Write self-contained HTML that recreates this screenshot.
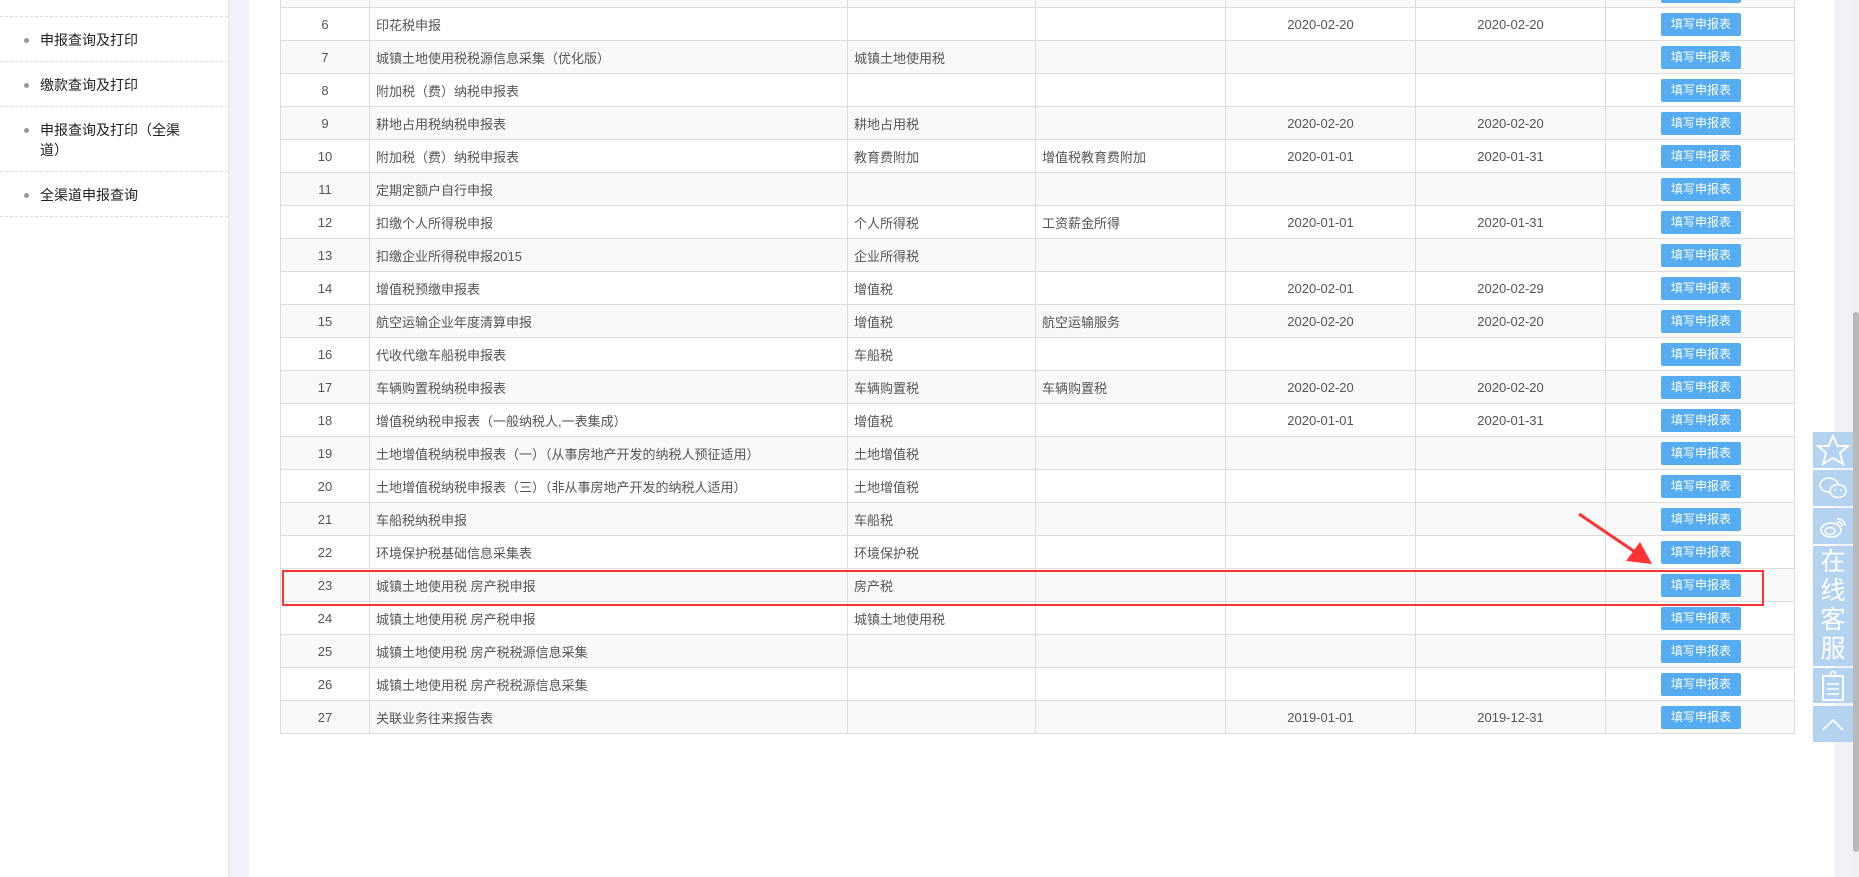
<!DOCTYPE html>
<html><head><meta charset="utf-8"><style>
body{margin:0;width:1859px;height:877px;overflow:hidden;background:#f0f2f5;font-family:"Liberation Sans","Noto Sans CJK SC",sans-serif;position:relative}
.side{position:absolute;left:0;top:0;width:228px;height:877px;background:#fff;border-right:1px solid #e2e2e2}
.side .it{position:absolute;left:0;width:228px;border-bottom:1px dashed #ddd;font-size:14px;color:#222}
.side .it span{position:absolute;left:40px}
.side .it i{position:absolute;left:24px;width:5px;height:5px;border-radius:50%;background:#999}
.main{position:absolute;left:249px;top:0;width:1585px;height:877px;background:#fff}
table{position:absolute;left:280px;top:-26px;border-collapse:collapse;table-layout:fixed;width:1514px;font-size:13px;color:#555}
td{border:1px solid #ddd;height:32px;padding:0 6px;white-space:nowrap;overflow:hidden}
tr:nth-child(odd) td{background:#f9f9f9}
td.c{text-align:center;padding:0}
.b{display:inline-block;width:80px;height:23px;line-height:23px;background:#55acf0;color:#fff;border-radius:2px;font-size:12px;text-align:center;margin-left:2px}
.red{position:absolute;left:282px;top:570px;width:1478px;height:32px;border:2px solid #f33}
.fb{position:absolute;left:1813px;width:40px;background:#b3d3f0}
.sb{position:absolute;left:1853px;top:0;width:6px;height:877px;background:#f0f0f0}
.th{position:absolute;left:1853px;top:312px;width:6px;height:540px;background:#b9b9b9;border-radius:3px}
</style></head><body>
<div class="side">
<div class="it" style="top:-20px;height:36px"></div>
<div class="it" style="top:17px;height:44px"><i style="top:21px"></i><span style="top:13px">申报查询及打印</span></div>
<div class="it" style="top:62px;height:44px"><i style="top:21px"></i><span style="top:13px">缴款查询及打印</span></div>
<div class="it" style="top:107px;height:64px"><i style="top:21px"></i><span style="top:13px;line-height:20px">申报查询及打印（全渠<br>道）</span></div>
<div class="it" style="top:172px;height:44px"><i style="top:21px"></i><span style="top:13px">全渠道申报查询</span></div>
</div>
<div class="main"></div>
<table>
<colgroup><col style="width:89px"><col style="width:478px"><col style="width:188px"><col style="width:190px"><col style="width:190px"><col style="width:190px"><col style="width:189px"></colgroup>
<tr><td class="c">5</td><td></td><td></td><td></td><td></td><td></td><td class="c"><span class="b">填写申报表</span></td></tr>
<tr><td class="c">6</td><td>印花税申报</td><td></td><td></td><td class="c">2020-02-20</td><td class="c">2020-02-20</td><td class="c"><span class="b">填写申报表</span></td></tr>
<tr><td class="c">7</td><td>城镇土地使用税税源信息采集（优化版）</td><td>城镇土地使用税</td><td></td><td></td><td></td><td class="c"><span class="b">填写申报表</span></td></tr>
<tr><td class="c">8</td><td>附加税（费）纳税申报表</td><td></td><td></td><td></td><td></td><td class="c"><span class="b">填写申报表</span></td></tr>
<tr><td class="c">9</td><td>耕地占用税纳税申报表</td><td>耕地占用税</td><td></td><td class="c">2020-02-20</td><td class="c">2020-02-20</td><td class="c"><span class="b">填写申报表</span></td></tr>
<tr><td class="c">10</td><td>附加税（费）纳税申报表</td><td>教育费附加</td><td>增值税教育费附加</td><td class="c">2020-01-01</td><td class="c">2020-01-31</td><td class="c"><span class="b">填写申报表</span></td></tr>
<tr><td class="c">11</td><td>定期定额户自行申报</td><td></td><td></td><td></td><td></td><td class="c"><span class="b">填写申报表</span></td></tr>
<tr><td class="c">12</td><td>扣缴个人所得税申报</td><td>个人所得税</td><td>工资薪金所得</td><td class="c">2020-01-01</td><td class="c">2020-01-31</td><td class="c"><span class="b">填写申报表</span></td></tr>
<tr><td class="c">13</td><td>扣缴企业所得税申报2015</td><td>企业所得税</td><td></td><td></td><td></td><td class="c"><span class="b">填写申报表</span></td></tr>
<tr><td class="c">14</td><td>增值税预缴申报表</td><td>增值税</td><td></td><td class="c">2020-02-01</td><td class="c">2020-02-29</td><td class="c"><span class="b">填写申报表</span></td></tr>
<tr><td class="c">15</td><td>航空运输企业年度清算申报</td><td>增值税</td><td>航空运输服务</td><td class="c">2020-02-20</td><td class="c">2020-02-20</td><td class="c"><span class="b">填写申报表</span></td></tr>
<tr><td class="c">16</td><td>代收代缴车船税申报表</td><td>车船税</td><td></td><td></td><td></td><td class="c"><span class="b">填写申报表</span></td></tr>
<tr><td class="c">17</td><td>车辆购置税纳税申报表</td><td>车辆购置税</td><td>车辆购置税</td><td class="c">2020-02-20</td><td class="c">2020-02-20</td><td class="c"><span class="b">填写申报表</span></td></tr>
<tr><td class="c">18</td><td>增值税纳税申报表（一般纳税人,一表集成）</td><td>增值税</td><td></td><td class="c">2020-01-01</td><td class="c">2020-01-31</td><td class="c"><span class="b">填写申报表</span></td></tr>
<tr><td class="c">19</td><td>土地增值税纳税申报表（一）（从事房地产开发的纳税人预征适用）</td><td>土地增值税</td><td></td><td></td><td></td><td class="c"><span class="b">填写申报表</span></td></tr>
<tr><td class="c">20</td><td>土地增值税纳税申报表（三）（非从事房地产开发的纳税人适用）</td><td>土地增值税</td><td></td><td></td><td></td><td class="c"><span class="b">填写申报表</span></td></tr>
<tr><td class="c">21</td><td>车船税纳税申报</td><td>车船税</td><td></td><td></td><td></td><td class="c"><span class="b">填写申报表</span></td></tr>
<tr><td class="c">22</td><td>环境保护税基础信息采集表</td><td>环境保护税</td><td></td><td></td><td></td><td class="c"><span class="b">填写申报表</span></td></tr>
<tr><td class="c">23</td><td>城镇土地使用税 房产税申报</td><td>房产税</td><td></td><td></td><td></td><td class="c"><span class="b">填写申报表</span></td></tr>
<tr><td class="c">24</td><td>城镇土地使用税 房产税申报</td><td>城镇土地使用税</td><td></td><td></td><td></td><td class="c"><span class="b">填写申报表</span></td></tr>
<tr><td class="c">25</td><td>城镇土地使用税 房产税税源信息采集</td><td></td><td></td><td></td><td></td><td class="c"><span class="b">填写申报表</span></td></tr>
<tr><td class="c">26</td><td>城镇土地使用税 房产税税源信息采集</td><td></td><td></td><td></td><td></td><td class="c"><span class="b">填写申报表</span></td></tr>
<tr><td class="c">27</td><td>关联业务往来报告表</td><td></td><td></td><td class="c">2019-01-01</td><td class="c">2019-12-31</td><td class="c"><span class="b">填写申报表</span></td></tr>
</table>
<div class="red"></div>
<svg style="position:absolute;left:0;top:0" width="1859" height="877"><line x1="1579" y1="514" x2="1638" y2="554" stroke="#f33" stroke-width="3"/><polygon points="1652,564 1626,561 1640,542" fill="#f33"/></svg>
<div class="fb" style="top:432px;height:36px"><svg width="40" height="36"><polygon points="20,4 24.5,14 35,14 27,21 30,32 20,26 10,32 13,21 5,14 15.5,14" fill="none" stroke="#fff" stroke-width="2"/></svg></div>
<div class="fb" style="top:470px;height:36px"><svg width="40" height="36"><ellipse cx="16" cy="15" rx="9" ry="7" fill="none" stroke="#fff" stroke-width="1.6"/><ellipse cx="25" cy="21" rx="8" ry="6.5" fill="#b3d3f0" stroke="#fff" stroke-width="1.6"/><circle cx="22" cy="20" r="1" fill="#fff"/><circle cx="28" cy="20" r="1" fill="#fff"/></svg></div>
<div class="fb" style="top:508px;height:36px"><svg width="40" height="36"><ellipse cx="18" cy="22" rx="10" ry="7" fill="none" stroke="#fff" stroke-width="1.6"/><ellipse cx="17" cy="23" rx="5" ry="3.5" fill="none" stroke="#fff" stroke-width="1.4"/><path d="M24 11a7 7 0 0 1 8 7M24 14a4 4 0 0 1 5 4" fill="none" stroke="#fff" stroke-width="1.6"/></svg></div>
<div class="fb" style="top:546px;height:120px;color:#fff;font-size:25px;line-height:29px;text-align:center;padding-top:2px;box-sizing:border-box">在<br>线<br>客<br>服</div>
<div class="fb" style="top:668px;height:35px"><svg width="40" height="35"><rect x="10" y="8" width="20" height="24" fill="none" stroke="#fff" stroke-width="1.8"/><circle cx="20" cy="6" r="2.5" fill="none" stroke="#fff" stroke-width="1.5"/><path d="M14 16h12M14 21h12M14 26h12" stroke="#fff" stroke-width="1.6"/></svg></div>
<div class="fb" style="top:706px;height:36px"><svg width="40" height="36"><path d="M10 24l10-10 10 10" fill="none" stroke="#fff" stroke-width="1.8"/></svg></div>
<div class="sb"></div><div class="th"></div>
</body></html>
